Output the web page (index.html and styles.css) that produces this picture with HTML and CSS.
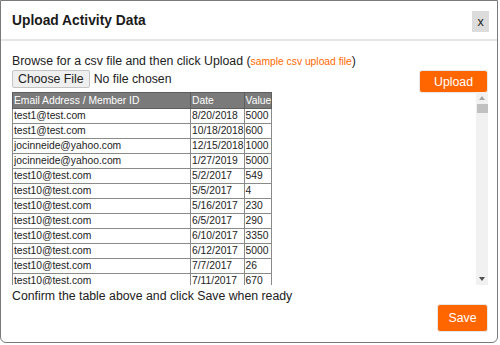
FILE: index.html
```html
<!DOCTYPE html>
<html lang="en">
<head>
    <meta charset="UTF-8">
    <meta name="viewport" content="width=device-width, initial-scale=1.0">
    <title>Upload Activity Data</title>
    <link rel="stylesheet" href="styles.css">
</head>
<body>
    <div class="modal">
        <div class="modal-header">
            <h1>Upload Activity Data</h1>
            <button class="close-button">x</button>
        </div>
        <div class="modal-body">
            <p class="intro">Browse for a csv file and then click Upload (<a href="#" class="sample-link">sample csv upload file</a>)</p>
            <div class="upload-row">
                <input type="file" class="file-input" accept=".csv">
                <button class="orange-button upload-button">Upload</button>
            </div>
            <div class="preview">
                <div class="preview-scroll">
                    <table class="preview-table">
                        <thead>
                            <tr>
                                <th class="col-email">Email Address / Member ID</th>
                                <th>Date</th>
                                <th>Value</th>
                            </tr>
                        </thead>
                        <tbody>
                            <tr><td>test1@test.com</td><td>8/20/2018</td><td>5000</td></tr>
                            <tr><td>test1@test.com</td><td>10/18/2018</td><td>600</td></tr>
                            <tr><td>jocinneide@yahoo.com</td><td>12/15/2018</td><td>1000</td></tr>
                            <tr><td>jocinneide@yahoo.com</td><td>1/27/2019</td><td>5000</td></tr>
                            <tr><td>test10@test.com</td><td>5/2/2017</td><td>549</td></tr>
                            <tr><td>test10@test.com</td><td>5/5/2017</td><td>4</td></tr>
                            <tr><td>test10@test.com</td><td>5/16/2017</td><td>230</td></tr>
                            <tr><td>test10@test.com</td><td>6/5/2017</td><td>290</td></tr>
                            <tr><td>test10@test.com</td><td>6/10/2017</td><td>3350</td></tr>
                            <tr><td>test10@test.com</td><td>6/12/2017</td><td>5000</td></tr>
                            <tr><td>test10@test.com</td><td>7/7/2017</td><td>26</td></tr>
                            <tr><td>test10@test.com</td><td>7/11/2017</td><td>670</td></tr>
                        </tbody>
                    </table>
                </div>
                <div class="scrollbar">
                    <span class="scroll-arrow arrow-up"></span>
                    <span class="scroll-thumb"></span>
                    <span class="scroll-track"></span>
                    <span class="scroll-arrow arrow-down"></span>
                </div>
            </div>
            <p class="confirm">Confirm the table above and click Save when ready</p>
            <div class="footer">
                <button class="orange-button save-button">Save</button>
            </div>
        </div>
    </div>
</body>
</html>
```

FILE: styles.css
```css
body {
    margin: 0;
    font-family: "Liberation Sans", Arial, sans-serif;
    background-color: #fff;
    color: #222;
}
.modal {
    width: 496px;
    height: 341px;
    border: 1px solid #7a7a7a;
    border-radius: 0 0 6px 6px;
    display: flex;
    flex-direction: column;
}
.modal-header {
    display: flex;
    justify-content: space-between;
    align-items: center;
    height: 39px;
    padding: 0 8px 0 11px;
    border-bottom: 2px solid #e6e6e6;
}
h1 {
    margin: 0;
    font-size: 13.8px;
    color: #1a1a1a;
}
.close-button {
    width: 17px;
    height: 21px;
    margin-top: 3px;
    padding: 0;
    border: none;
    background-color: #dcdcdc;
    color: #222;
    font-family: inherit;
    font-size: 12.5px;
}
.modal-body {
    flex-grow: 1;
    display: flex;
    flex-direction: column;
    padding: 13px 9px 10px 11px;
}
p {
    margin: 0;
    font-size: 12.3px;
    line-height: 15px;
    color: #222;
}
.sample-link {
    color: #ff6a00;
    font-size: 10.3px;
    text-decoration: none;
}
.upload-row {
    display: flex;
    justify-content: space-between;
    align-items: flex-start;
    height: 23px;
}
.file-input {
    font-family: inherit;
    font-size: 12.3px;
    color: #222;
    margin: 1px 0 0;
}
.file-input::file-selector-button {
    font-family: inherit;
    font-size: 12.3px;
    height: 18px;
    padding: 0 5px;
    margin-right: 4px;
    background-color: #efefef;
    border: 1px solid #c4c4c4;
    border-radius: 2px;
    color: #222;
}
.orange-button {
    background-color: #ff6600;
    color: white;
    border: 1px solid #e8e8e8;
    border-radius: 3px;
    font-family: inherit;
    font-size: 12.3px;
    cursor: pointer;
}
.upload-button {
    width: 69px;
    height: 23px;
    margin-top: 1px;
}
.preview {
    display: flex;
    height: 193px;
}
.preview-scroll {
    flex-grow: 1;
    overflow: hidden;
}
.scrollbar {
    width: 12px;
    display: flex;
    flex-direction: column;
    background-color: #f1f1f1;
}
.scroll-arrow {
    height: 12px;
    display: flex;
    justify-content: center;
    align-items: center;
}
.scroll-arrow::before {
    content: "";
    border-left: 3px solid transparent;
    border-right: 3px solid transparent;
}
.arrow-up::before {
    border-bottom: 4px solid #a3a3a3;
}
.arrow-down::before {
    border-top: 4px solid #505050;
}
.scroll-thumb {
    height: 9px;
    margin-left: 1px;
    background-color: #c1c1c1;
}
.scroll-track {
    flex-grow: 1;
}
.preview-table {
    border-collapse: collapse;
    font-size: 10.3px;
    color: #222;
}
.preview-table th {
    background-color: #7a7a7a;
    color: white;
    font-weight: normal;
    text-align: left;
    line-height: 13px;
    padding: 1px 0 1px 1px;
    border: 1px solid #5e5e5e;
}
.preview-table td {
    line-height: 12px;
    padding: 1px 0 1px 1px;
    border: 1px solid #8a8a8a;
    white-space: nowrap;
}
.col-email {
    width: 176px;
}
.confirm {
    margin-top: 4px;
}
.footer {
    display: flex;
    justify-content: flex-end;
}
.save-button {
    width: 51px;
    height: 28px;
}
```
